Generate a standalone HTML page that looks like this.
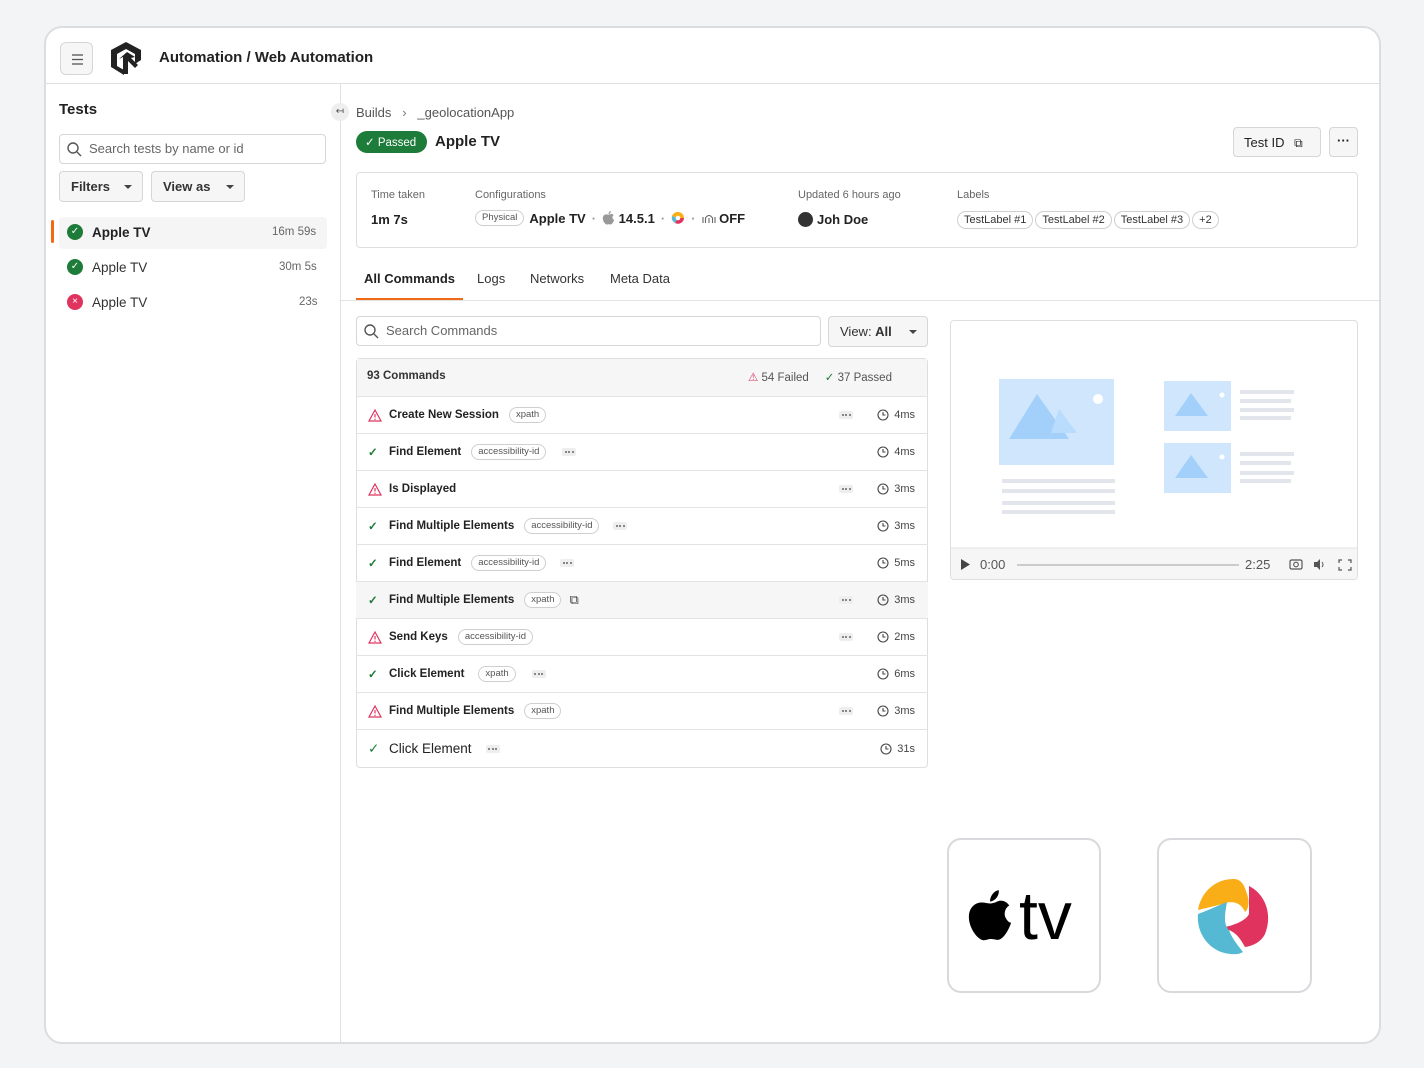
<!DOCTYPE html>
<html><head><meta charset="utf-8"><style>
*{box-sizing:border-box;margin:0;padding:0}
body{width:1424px;height:1068px;background:#f3f4f6;font-family:"Liberation Sans",Arial,sans-serif;color:#222;position:relative;overflow:hidden}
.a{position:absolute}
.frame{left:44px;top:26px;width:1337px;height:1018px;background:#fff;border:2px solid #dcdde0;border-radius:18px;overflow:hidden}
.btn{border:1px solid #d6d6d6;background:#f6f6f6;border-radius:4px}
.pill{border:1px solid #cfcfcf;border-radius:10px;font-size:10px;color:#555;padding:1px 6px;background:#fff;display:inline-block;line-height:12px}
.row{position:absolute;left:356px;width:572px;height:37px;border-top:1px solid #e3e3e3;display:flex;align-items:center;font-size:11.5px;color:#222;font-weight:bold}
.row .ic{width:14px;margin-left:12px;margin-right:7px;display:flex}
.row .nm{margin-right:10px}
.dots{display:inline-flex;background:#eee;border-radius:2px;width:14px;height:8px;align-items:center;justify-content:center;gap:1.5px}
.dots i{width:2px;height:2px;border-radius:50%;background:#666;display:block}
.tm{position:absolute;right:13px;display:flex;align-items:center;gap:5px;font-weight:normal;color:#444;font-size:11px}
.rd{position:absolute;right:75px}
.lab{display:inline-block;border:1px solid #cfcfcf;border-radius:10px;font-size:11px;padding:2px 6px;color:#333;margin-right:2px}
</style></head><body>
<div class="a frame">
</div>
<!-- header -->
<div class="a btn" style="left:60px;top:42px;width:33px;height:33px;border-radius:6px"><svg width="33" height="33"><g stroke="#555" stroke-width="1.3"><line x1="11" y1="12" x2="22" y2="12"/><line x1="11" y1="16.5" x2="22" y2="16.5"/><line x1="11" y1="21" x2="22" y2="21"/></g></svg></div>
<svg class="a" style="left:109px;top:40px" width="34" height="36" viewBox="0 0 34 36"><path d="M17 2 L32 10 L32 20 L26 24 L26 14 L17 9 L8 14 L8 26 L15 30 L15 35 L2 27 L2 10 Z" fill="#222"/><path d="M14 34 L14 17 L10 19 L18 12 L26 17 L22 18 L29 25 L26 28 L19 21 L19 34 Z" fill="#222"/></svg>
<div class="a" style="left:159px;top:49px;font-size:15px;font-weight:bold;color:#222">Automation / Web Automation</div>
<div class="a" style="left:46px;top:83px;width:1333px;height:1px;background:#e0e0e0"></div>
<div class="a" style="left:340px;top:84px;width:1px;height:958px;background:#e0e0e0"></div>
<!-- sidebar -->
<div class="a" style="left:59px;top:101px;font-size:15px;font-weight:bold">Tests</div>
<div class="a" style="left:59px;top:134px;width:267px;height:30px;border:1px solid #d6d6d6;border-radius:4px;font-size:13px;color:#666;padding:6px 0 0 29px">Search tests by name or id
<svg class="a" style="left:7px;top:7px" width="15" height="15"><circle cx="6" cy="6" r="5" fill="none" stroke="#555" stroke-width="1.4"/><line x1="10" y1="10" x2="14" y2="14" stroke="#555" stroke-width="1.4"/></svg></div>
<div class="a btn" style="left:59px;top:171px;width:84px;height:31px;font-size:13px;font-weight:bold;padding:7px 0 0 11px;color:#333">Filters<span style="position:absolute;right:10px;top:13px;border:4px solid transparent;border-top:4px solid #444"></span></div>
<div class="a btn" style="left:151px;top:171px;width:94px;height:31px;font-size:13px;font-weight:bold;padding:7px 0 0 11px;color:#333">View as<span style="position:absolute;right:10px;top:13px;border:4px solid transparent;border-top:4px solid #444"></span></div>
<div class="a" style="left:51px;top:220px;width:3px;height:23px;background:#f06a16;border-radius:2px"></div>
<div class="a" style="left:59px;top:217px;width:268px;height:32px;background:#f5f5f5;border-radius:4px"></div>
<div class="a" style="left:67px;top:224px;width:16px;height:16px;border-radius:50%;background:#1e7c3a;color:#fff;font-size:10px;text-align:center;line-height:16px">✓</div>
<div class="a" style="left:92px;top:225px;font-size:13.5px;font-weight:bold">Apple TV</div>
<div class="a" style="left:272px;top:226px;font-size:11.5px;color:#666">16m 59s</div>
<div class="a" style="left:67px;top:259px;width:16px;height:16px;border-radius:50%;background:#1e7c3a;color:#fff;font-size:10px;text-align:center;line-height:16px">✓</div>
<div class="a" style="left:92px;top:260px;font-size:13.5px;color:#333">Apple TV</div>
<div class="a" style="left:279px;top:261px;font-size:11.5px;color:#666">30m 5s</div>
<div class="a" style="left:67px;top:294px;width:16px;height:16px;border-radius:50%;background:#e0335e;color:#fff;font-size:10px;text-align:center;line-height:16px">×</div>
<div class="a" style="left:92px;top:295px;font-size:13.5px;color:#333">Apple TV</div>
<div class="a" style="left:299px;top:296px;font-size:11.5px;color:#666">23s</div>
<!-- main header -->
<div class="a" style="left:331px;top:103px;width:18px;height:18px;border-radius:50%;background:#eee;font-size:10px;text-align:center;line-height:18px;color:#555">↤</div>
<div class="a" style="left:356px;top:105px;font-size:13px;color:#555">Builds &nbsp;&nbsp;<span style="color:#777">›</span>&nbsp;&nbsp; _geolocationApp</div>
<div class="a" style="left:356px;top:131px;width:71px;height:22px;background:#1e7c3a;border-radius:11px;color:#fff;font-size:11.5px;padding:4px 0 0 9px">✓ Passed</div>
<div class="a" style="left:435px;top:133px;font-size:15px;font-weight:bold">Apple TV</div>
<div class="a btn" style="left:1233px;top:127px;width:88px;height:30px;font-size:13px;padding:7px 0 0 10px;color:#222">Test ID <span style="font-size:12px;margin-left:6px">⧉</span></div>
<div class="a btn" style="left:1329px;top:127px;width:29px;height:30px;font-size:13px;text-align:center;line-height:26px;font-weight:bold">···</div>
<!-- info box -->
<div class="a" style="left:356px;top:172px;width:1002px;height:76px;border:1px solid #dedede;border-radius:4px"></div>
<div class="a" style="left:371px;top:189px;font-size:11px;color:#666">Time taken</div>
<div class="a" style="left:371px;top:212px;font-size:13px;font-weight:bold">1m 7s</div>
<div class="a" style="left:475px;top:189px;font-size:11px;color:#666">Configurations</div>
<div class="a" style="left:475px;top:210px;font-size:13px;font-weight:bold;display:flex;align-items:center;white-space:nowrap"><span class="pill" style="font-weight:normal;font-size:9.5px;margin-right:5px">Physical</span>Apple TV <span style="color:#999;margin:0 6px">·</span><svg width="13" height="14" viewBox="0 0 50 54"><path d="M25 14 C30 14 33 11 36 11 C40 11 43 13 45 16 C40 19 39 26 42 30 C43 32 45 34 47 34 C45 40 41 48 36 51 C33 53 30 51 26 51 C22 51 20 53 17 52 C11 50 3 39 3 28 C3 18 10 13 16 13 C20 13 22 14 25 14Z" fill="#999"/><path d="M25 12 C25 6 29 1 34 0 C35 5 31 11 25 12Z" fill="#999"/></svg>&nbsp;14.5.1<span style="color:#999;margin:0 6px">·</span><svg width="14" height="14" viewBox="0 0 14 14"><path d="M7 1 A6 6 0 0 1 13 7 L7 7Z" fill="#f9ae17"/><path d="M13 7 A6 6 0 0 1 4 12 L7 7Z" fill="#e0335e"/><path d="M4 12 A6 6 0 0 1 1 5 L7 7Z" fill="#56b9d3"/><path d="M1 5 A6 6 0 0 1 7 1 L7 7Z" fill="#f9ae17"/><circle cx="7" cy="7" r="2.3" fill="#fff"/></svg><span style="color:#999;margin:0 6px">·</span><svg width="14" height="10"><g stroke="#666" fill="none" stroke-width="1.1"><line x1="1" y1="4" x2="1" y2="10"/><path d="M3.5 10 V5 Q7 0 10.5 5 V10"/><line x1="7" y1="5" x2="7" y2="10"/><line x1="13" y1="4" x2="13" y2="10"/></g></svg>&nbsp;OFF</div>
<div class="a" style="left:798px;top:189px;font-size:11px;color:#666">Updated 6 hours ago</div>
<div class="a" style="left:798px;top:212px;width:15px;height:15px;border-radius:50%;background:#333"></div>
<div class="a" style="left:817px;top:212px;font-size:13px;font-weight:bold">Joh Doe</div>
<div class="a" style="left:957px;top:189px;font-size:11px;color:#666">Labels</div>
<div class="a" style="left:957px;top:210px;white-space:nowrap"><span class="lab">TestLabel #1</span><span class="lab">TestLabel #2</span><span class="lab">TestLabel #3</span><span class="lab">+2</span></div>
<!-- tabs -->
<div class="a" style="left:364px;top:271px;font-size:13px;font-weight:bold">All Commands</div>
<div class="a" style="left:477px;top:271px;font-size:13px;color:#333">Logs</div>
<div class="a" style="left:530px;top:271px;font-size:13px;color:#333">Networks</div>
<div class="a" style="left:610px;top:271px;font-size:13px;color:#333">Meta Data</div>
<div class="a" style="left:341px;top:300px;width:1038px;height:1px;background:#e3e3e3"></div>
<div class="a" style="left:356px;top:298px;width:107px;height:2px;background:#f06a16"></div>
<!-- search commands -->
<div class="a" style="left:356px;top:316px;width:465px;height:30px;border:1px solid #d6d6d6;border-radius:4px;font-size:13px;color:#666;padding:6px 0 0 29px">Search Commands
<svg class="a" style="left:7px;top:7px" width="15" height="15"><circle cx="6" cy="6" r="5" fill="none" stroke="#555" stroke-width="1.4"/><line x1="10" y1="10" x2="14" y2="14" stroke="#555" stroke-width="1.4"/></svg></div>
<div class="a btn" style="left:828px;top:316px;width:100px;height:31px;font-size:13px;padding:7px 0 0 11px;color:#333">View: <b>All</b><span style="position:absolute;right:10px;top:13px;border:4px solid transparent;border-top:4px solid #444"></span></div>
<!-- commands table -->
<div class="a" style="left:356px;top:358px;width:572px;height:410px;border:1px solid #dedede;border-radius:4px"></div>
<div class="a" style="left:357px;top:359px;width:570px;height:37px;background:#f6f6f6"></div>
<div class="a" style="left:367px;top:370px;font-size:11.5px;font-weight:bold;color:#333">93 Commands</div>
<div class="a" style="left:748px;top:370px;font-size:11.5px;color:#555;white-space:nowrap"><span style="color:#e0335e">⚠</span> 54 Failed &nbsp;&nbsp;&nbsp;&nbsp;<span style="color:#1e7c3a">✓</span> 37 Passed</div>

<div class="row" style="top:396px"><span class="ic"><svg width="14" height="13"><path d="M7 1 L13 12 L1 12Z" fill="none" stroke="#e0335e" stroke-width="1.2"/><line x1="7" y1="5" x2="7" y2="8.5" stroke="#e0335e" stroke-width="1.2"/><circle cx="7" cy="10.3" r=".7" fill="#e0335e"/></svg></span><span class="nm">Create New Session</span><span class="pill" style="font-weight:normal;font-size:9.5px">xpath</span><span class="dots rd"><i></i><i></i><i></i></span><span class="tm"><svg width="12" height="12"><circle cx="6" cy="6" r="5" fill="none" stroke="#444" stroke-width="1.1"/><path d="M6 3 V6 H8.5" fill="none" stroke="#444" stroke-width="1.1"/></svg>4ms</span></div>
<div class="row" style="top:433px"><span class="ic" style="color:#1e7c3a">✓</span><span class="nm">Find Element</span><span class="pill" style="font-weight:normal;font-size:9.5px">accessibility-id</span><span class="dots" style="margin-left:16px"><i></i><i></i><i></i></span><span class="tm"><svg width="12" height="12"><circle cx="6" cy="6" r="5" fill="none" stroke="#444" stroke-width="1.1"/><path d="M6 3 V6 H8.5" fill="none" stroke="#444" stroke-width="1.1"/></svg>4ms</span></div>
<div class="row" style="top:470px"><span class="ic"><svg width="14" height="13"><path d="M7 1 L13 12 L1 12Z" fill="none" stroke="#e0335e" stroke-width="1.2"/><line x1="7" y1="5" x2="7" y2="8.5" stroke="#e0335e" stroke-width="1.2"/><circle cx="7" cy="10.3" r=".7" fill="#e0335e"/></svg></span><span class="nm">Is Displayed</span><span class="dots rd"><i></i><i></i><i></i></span><span class="tm"><svg width="12" height="12"><circle cx="6" cy="6" r="5" fill="none" stroke="#444" stroke-width="1.1"/><path d="M6 3 V6 H8.5" fill="none" stroke="#444" stroke-width="1.1"/></svg>3ms</span></div>
<div class="row" style="top:507px"><span class="ic" style="color:#1e7c3a">✓</span><span class="nm">Find Multiple Elements</span><span class="pill" style="font-weight:normal;font-size:9.5px">accessibility-id</span><span class="dots" style="margin-left:14px"><i></i><i></i><i></i></span><span class="tm"><svg width="12" height="12"><circle cx="6" cy="6" r="5" fill="none" stroke="#444" stroke-width="1.1"/><path d="M6 3 V6 H8.5" fill="none" stroke="#444" stroke-width="1.1"/></svg>3ms</span></div>
<div class="row" style="top:544px"><span class="ic" style="color:#1e7c3a">✓</span><span class="nm">Find Element</span><span class="pill" style="font-weight:normal;font-size:9.5px">accessibility-id</span><span class="dots" style="margin-left:14px"><i></i><i></i><i></i></span><span class="tm"><svg width="12" height="12"><circle cx="6" cy="6" r="5" fill="none" stroke="#444" stroke-width="1.1"/><path d="M6 3 V6 H8.5" fill="none" stroke="#444" stroke-width="1.1"/></svg>5ms</span></div>
<div class="row" style="top:581px;background:#f6f6f6"><span class="ic" style="color:#1e7c3a">✓</span><span class="nm">Find Multiple Elements</span><span class="pill" style="font-weight:normal;font-size:9.5px">xpath</span><span style="margin-left:8px;font-weight:normal;font-size:13px;color:#444">⧉</span><span class="dots rd"><i></i><i></i><i></i></span><span class="tm"><svg width="12" height="12"><circle cx="6" cy="6" r="5" fill="none" stroke="#444" stroke-width="1.1"/><path d="M6 3 V6 H8.5" fill="none" stroke="#444" stroke-width="1.1"/></svg>3ms</span></div>
<div class="row" style="top:618px"><span class="ic"><svg width="14" height="13"><path d="M7 1 L13 12 L1 12Z" fill="none" stroke="#e0335e" stroke-width="1.2"/><line x1="7" y1="5" x2="7" y2="8.5" stroke="#e0335e" stroke-width="1.2"/><circle cx="7" cy="10.3" r=".7" fill="#e0335e"/></svg></span><span class="nm">Send Keys</span><span class="pill" style="font-weight:normal;font-size:9.5px">accessibility-id</span><span class="dots rd"><i></i><i></i><i></i></span><span class="tm"><svg width="12" height="12"><circle cx="6" cy="6" r="5" fill="none" stroke="#444" stroke-width="1.1"/><path d="M6 3 V6 H8.5" fill="none" stroke="#444" stroke-width="1.1"/></svg>2ms</span></div>
<div class="row" style="top:655px"><span class="ic" style="color:#1e7c3a">✓</span><span class="nm" style="margin-right:14px">Click Element</span><span class="pill" style="font-weight:normal;font-size:9.5px">xpath</span><span class="dots" style="margin-left:16px"><i></i><i></i><i></i></span><span class="tm"><svg width="12" height="12"><circle cx="6" cy="6" r="5" fill="none" stroke="#444" stroke-width="1.1"/><path d="M6 3 V6 H8.5" fill="none" stroke="#444" stroke-width="1.1"/></svg>6ms</span></div>
<div class="row" style="top:692px"><span class="ic"><svg width="14" height="13"><path d="M7 1 L13 12 L1 12Z" fill="none" stroke="#e0335e" stroke-width="1.2"/><line x1="7" y1="5" x2="7" y2="8.5" stroke="#e0335e" stroke-width="1.2"/><circle cx="7" cy="10.3" r=".7" fill="#e0335e"/></svg></span><span class="nm">Find Multiple Elements</span><span class="pill" style="font-weight:normal;font-size:9.5px">xpath</span><span class="dots rd"><i></i><i></i><i></i></span><span class="tm"><svg width="12" height="12"><circle cx="6" cy="6" r="5" fill="none" stroke="#444" stroke-width="1.1"/><path d="M6 3 V6 H8.5" fill="none" stroke="#444" stroke-width="1.1"/></svg>3ms</span></div>
<div class="row" style="top:729px;height:38px;font-size:13.5px;font-weight:normal;border-bottom:none"><span class="ic" style="color:#1e7c3a">✓</span><span class="nm" style="margin-right:14px">Click Element</span><span class="dots"><i></i><i></i><i></i></span><span class="tm"><svg width="12" height="12"><circle cx="6" cy="6" r="5" fill="none" stroke="#444" stroke-width="1.1"/><path d="M6 3 V6 H8.5" fill="none" stroke="#444" stroke-width="1.1"/></svg>31s</span></div>

<!-- video -->
<div class="a" style="left:950px;top:320px;width:408px;height:260px;border:1px solid #dedede;border-radius:4px;overflow:hidden">
<svg width="408" height="260">
<rect x="48" y="58" width="115" height="86" fill="#cfe6fd"/><path d="M58 118 L86 73 L118 118Z" fill="#a3d0fb"/><path d="M108 88 L126 112 L100 112Z" fill="#b9dcfc"/><circle cx="147" cy="78" r="5" fill="#fff"/>
<g fill="#e2e6ec"><rect x="51" y="158" width="113" height="4"/><rect x="51" y="168" width="113" height="4"/><rect x="51" y="180" width="113" height="4"/><rect x="51" y="189" width="113" height="4"/></g>
<rect x="213" y="60" width="67" height="50" fill="#cfe6fd"/><path d="M224 95 L240 72 L257 95Z" fill="#a3d0fb"/><circle cx="271" cy="74" r="2.5" fill="#fff"/>
<rect x="213" y="122" width="67" height="50" fill="#cfe6fd"/><path d="M224 157 L240 134 L257 157Z" fill="#a3d0fb"/><circle cx="271" cy="136" r="2.5" fill="#fff"/>
<g fill="#e2e6ec"><rect x="289" y="69" width="54" height="4"/><rect x="289" y="78" width="51" height="4"/><rect x="289" y="87" width="54" height="4"/><rect x="289" y="95" width="51" height="4"/><rect x="289" y="131" width="54" height="4"/><rect x="289" y="140" width="51" height="4"/><rect x="289" y="150" width="54" height="4"/><rect x="289" y="158" width="51" height="4"/></g>
<rect x="0" y="227" width="408" height="33" fill="#f6f6f6"/><line x1="0" y1="227" x2="408" y2="227" stroke="#e3e3e3"/>
<path d="M10 238 L19 243.5 L10 249Z" fill="#444"/>
<text x="29" y="248" font-size="13" fill="#555" font-family="Liberation Sans">0:00</text>
<rect x="66" y="243" width="222" height="2" fill="#ccc"/>
<text x="294" y="248" font-size="13" fill="#555" font-family="Liberation Sans">2:25</text>
<rect x="339" y="239" width="12" height="9" rx="1.5" fill="none" stroke="#555" stroke-width="1.2"/><circle cx="345" cy="243.5" r="2.3" fill="none" stroke="#555" stroke-width="1.1"/>
<path d="M363 241 L366 241 L369 238 L369 249 L366 246 L363 246Z" fill="#555"/><path d="M371 241 Q373 243.5 371 246" fill="none" stroke="#555"/>
<path d="M388 242 V239 H391 M397 239 H400 V242 M400 246 V249 H397 M391 249 H388 V246" fill="none" stroke="#555" stroke-width="1.2"/>
</svg></div>
<!-- logos -->
<div class="a" style="left:947px;top:838px;width:154px;height:155px;background:#fff;border:2px solid #d8d9dc;border-radius:14px"></div>
<svg class="a" style="left:966px;top:889px" width="48" height="54" viewBox="0 0 50 54"><path d="M25 14 C30 14 33 11 36 11 C40 11 43 13 45 16 C40 19 39 26 42 30 C43 32 45 34 47 34 C45 40 41 48 36 51 C33 53 30 51 26 51 C22 51 20 53 17 52 C11 50 3 39 3 28 C3 18 10 13 16 13 C20 13 22 14 25 14Z" fill="#000"/><path d="M25 12 C25 6 29 1 34 0 C35 5 31 11 25 12Z" fill="#000"/></svg>
<div class="a" style="left:1019px;top:876px;font-size:68px;font-weight:normal;color:#000;letter-spacing:0px;line-height:80px">tv</div>
<div class="a" style="left:1157px;top:838px;width:155px;height:155px;background:#fff;border:2px solid #d8d9dc;border-radius:14px"></div>
<svg class="a" style="left:1195px;top:876px" width="78" height="80" viewBox="0 0 78 80"><path d="M3 34 C6 15 22 2 40 3 C48 4 50 12 52 18 C55 26 53 34 50 36 C46 26 36 24 28 28 Z" fill="#f9ae17"/><path d="M54 10 C70 18 78 38 70 58 C66 66 58 70 50 71 C42 56 36 54 26 52 C36 50 50 46 54 38 Z" fill="#e0335e"/><path d="M32 26 C22 30 14 34 3 38 C1 60 18 80 42 78 C44 78 46 77 48 76 C40 66 36 60 34 54 C28 48 30 38 32 26Z" fill="#56b9d3"/></svg>
</body></html>
